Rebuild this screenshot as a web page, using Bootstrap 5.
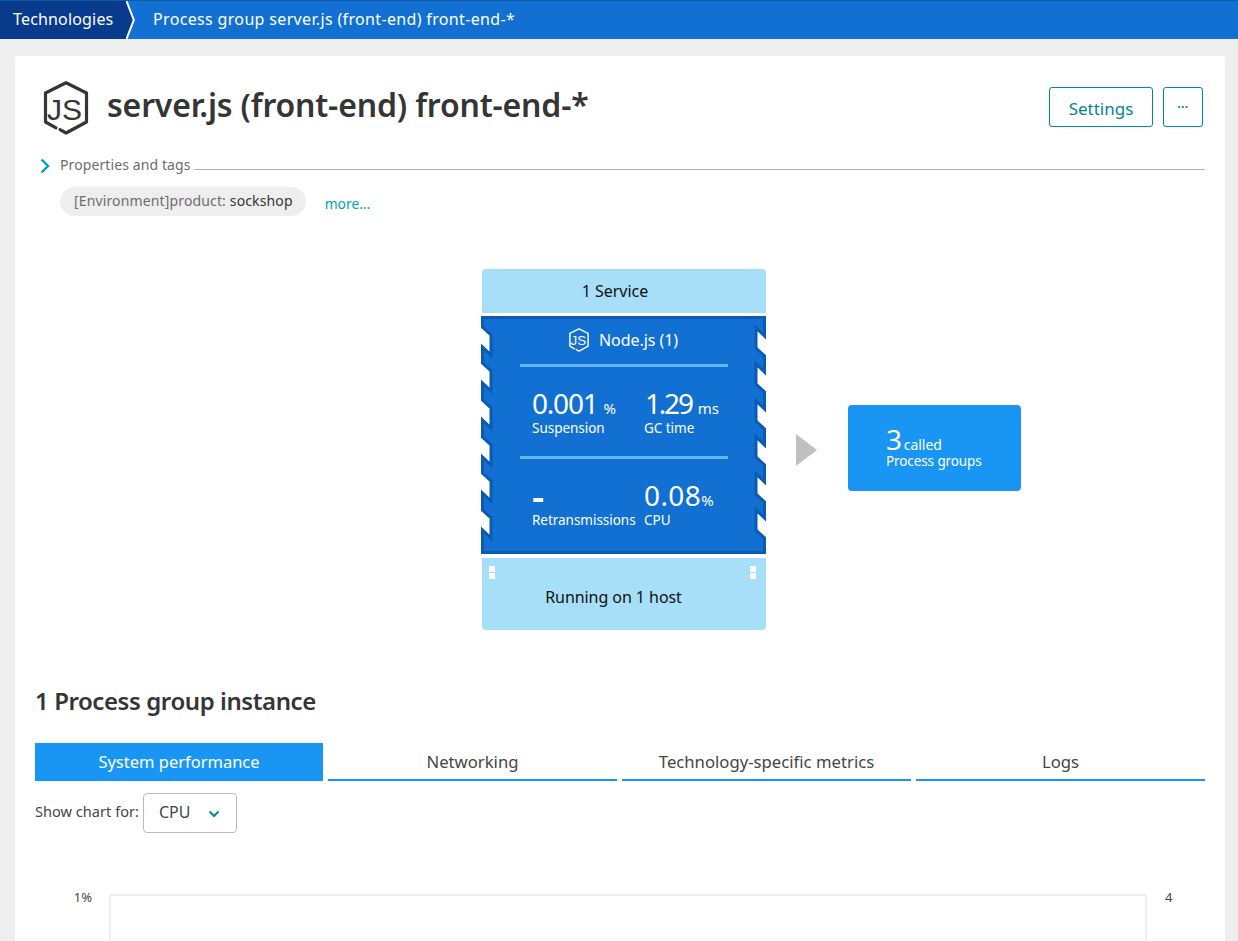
<!DOCTYPE html>
<html lang="en">
<head>
<meta charset="utf-8">
<title>Process group server.js</title>
<link href="https://cdn.jsdelivr.net/npm/bootstrap@5.3.0/dist/css/bootstrap.min.css" rel="stylesheet">
<style>
html,body{height:941px;overflow:hidden}
body{background:#eee;font-family:"Noto Sans","Liberation Sans",sans-serif;color:#454646}
.topbar{height:39px;background:#1170d2;border-top:1px solid #0e5aa8;color:#fff;font-size:16px}
.crumb-home{background:#083b8c;height:38px;width:126px;padding-left:13px;line-height:36px;letter-spacing:.17px}
.crumb-tip{display:block;flex:none}
.crumb-now{padding-left:17px;line-height:36px;letter-spacing:.34px}
.sheet{margin:17px 13px 0 15px;height:900px;background:#fff;border-radius:3px;overflow:hidden}
.head-row{padding:25px 22px 0 27px}
.pg-title{font-size:32px;line-height:52px;font-weight:600;color:#353535;margin:-2px 0 0 17px;letter-spacing:-.18px}
.btn-dt{border:1px solid #00899e;color:#00849b;border-radius:3px;height:40px;padding:0;line-height:38px;background:#fff;margin-top:6px}
.btn-set{width:104px;font-size:17px;line-height:41px}
.btn-more{width:40px;margin-left:10px;font-weight:700;font-size:12px;letter-spacing:.4px}
.props{margin:22px 20px 0 25px;height:16px;font-size:14px;color:#6d6d6d;line-height:16px;letter-spacing:.1px}
.props-chev{margin:1px 10px 0 0;flex:none}
.props-rule{height:1px;background:#b2b2b2;margin:12px 0 0 3px}
.tag-row{margin:14px 0 0 45px}
.tag-pill{background:#eee;border-radius:15px;height:29px;line-height:27px;padding:0 13px 0 14px;font-size:14px;color:#6d6d6d;letter-spacing:.14px}
.tag-pill b{font-weight:400;color:#353535}
.more-link{color:#00a1b2;font-size:13.8px;margin:7px 0 0 19px;line-height:20px;text-decoration:none}
.diagram{margin:53px 0 0 466px;height:361px}
.stack{width:285px}
.tier{background:#a6dff7;color:#111;font-size:16px;text-align:center}
.tier-top{height:44px;line-height:44px;border-radius:4px 4px 0 0;margin:0 0 3px 1px;padding-right:18px}
.tier-bottom{height:72px;line-height:78px;border-radius:0 0 4px 4px;margin:4px 0 0 1px;position:relative;padding-right:21px;letter-spacing:-.06px}
.port{position:absolute;width:6px;height:6px;background:#fff;top:8px}
.port-b{top:15px}
.port-l{left:7px}
.port-r{right:10px}
.proc{position:relative;height:238px;color:#fff}
.proc-bg{position:absolute;inset:0}
.proc-in{position:relative;padding:0 38px 0 39px}
.proc-name{height:48px;padding:12px 2px 0 0;font-size:16px;line-height:24px;letter-spacing:-.05px}
.proc-name svg{margin-right:9px;flex:none}
.sep{height:3px;background:#5fb6f2}
.mrow{display:grid;grid-template-columns:112px 96px;height:89px;padding:21px 0 0 12px}
.mrow.low{padding-top:22px}
.mrow.high .mlab{margin-top:1px}
.mrow.low .mval{margin:-1px 0 1px}
.mval{font-size:28px;height:30px;line-height:30px;white-space:nowrap;letter-spacing:.4px}
.mval.snug{letter-spacing:-1.2px}
.mval.tight{letter-spacing:-2.2px;padding-left:1px}
.mval small{font-size:15px;letter-spacing:0}
.mval.snug small{margin-left:6px}
.mval.tight small{margin-left:6px}
.mval .dash{font-size:38px;font-weight:600;letter-spacing:0}
.mlab{font-size:13.5px;line-height:19px;white-space:nowrap;letter-spacing:-.03px}
.flow-arrow{margin:165px 0 0 30px;flex:none}
.called{width:173px;height:86px;margin:136px 0 0 31px;background:#1996f3;color:#fff;border-radius:4px;padding:20px 0 0 38px;flex:none;font-size:13.5px;letter-spacing:-.1px}
.called-top{height:28px;line-height:28px;font-size:14px;letter-spacing:0}
.called-top span{font-size:28px;margin-right:-2px}
.called-sub{line-height:16px}
.pg-count{font-size:24px;line-height:30px;font-weight:600;color:#353535;margin:56px 0 0 20px;letter-spacing:-.42px}
.tabs-row{margin:27px 20px 0;gap:5px}
.tab-dt{flex:1 1 0;height:38px;line-height:37px;text-align:center;font-size:16.7px;color:#454646;border-bottom:2px solid #1996f3}
.tab-dt.on{flex:0 0 288px;background:#1996f3;color:#fff;font-size:16.5px}
.show-row{margin:12px 0 0 20px;font-size:14.6px}
.show-label{margin-top:-2px}
.pick{width:94px;height:40px;margin-left:4px;border:1px solid #bbb;border-radius:4px;padding-left:15px;font-size:16px;line-height:36px;color:#454646}
.pick svg{margin-left:18px}
.chart-row{margin:61px 0 0 0;font-size:13px}
.axis-l{width:94px;text-align:right;padding-right:17px;line-height:6px}
.plot{width:1038px;height:60px;border:2px solid #eee;border-bottom:0}
.axis-r{margin-left:18px;line-height:6px}
</style>
</head>
<body>
<div class="topbar d-flex">
  <div class="crumb-home">Technologies</div>
  <svg class="crumb-tip" width="10" height="38" viewBox="0 0 10 38"><polygon points="0,0 0,38 1,38 8,19 1,0" fill="#083b8c"/><polyline points="0.5,0 7.8,19 0.5,38" fill="none" stroke="#fff" stroke-width="2"/></svg>
  <div class="crumb-now">Process group server.js (front-end) front-end-*</div>
</div>

<div class="sheet">
  <div class="head-row d-flex align-items-start">
    <svg width="48" height="54" viewBox="0 0 48 54" class="flex-shrink-0">
      <path d="M14 46.8 L3.5 41 V12 L24 1.8 L44.5 12 V41 L24 52 L18 48.6" fill="none" stroke="#353535" stroke-width="3.2" stroke-linejoin="round" stroke-linecap="round"/>
      <text x="5" y="39" font-family="'Liberation Sans',sans-serif" font-size="30" fill="#353535">JS</text>
    </svg>
    <div class="pg-title flex-grow-1">server.js (front-end) front-end-*</div>
    <a class="btn btn-dt btn-set">Settings</a>
    <a class="btn btn-dt btn-more">···</a>
  </div>

  <div class="props d-flex">
    <svg class="props-chev" width="10" height="16" viewBox="0 0 10 16"><polyline points="1.5,1.5 8,8 1.5,14.5" fill="none" stroke="#00a1b2" stroke-width="2.4"/></svg>
    <span class="text-nowrap">Properties and tags</span>
    <div class="props-rule flex-grow-1"></div>
  </div>

  <div class="tag-row d-flex">
    <div class="tag-pill">[Environment]product: <b>sockshop</b></div>
    <a class="more-link">more...</a>
  </div>

  <div class="diagram d-flex align-items-start">
    <div class="stack flex-shrink-0">
      <div class="tier tier-top">1 Service</div>
      <div class="proc">
        <svg class="proc-bg" width="285" height="238" viewBox="0 0 285 238">
          <polygon fill="#1170d2" stroke="#0b5bb3" stroke-width="3" points="1.5,1.5 283.5,1.5 283.5,20 275,12 275,32 283.5,40 283.5,56 275,48 275,68 283.5,76 283.5,93 275,85 275,105 283.5,113 283.5,129 275,121 275,141 283.5,149 283.5,166 275,158 275,178 283.5,186 283.5,202 275,194 275,214 283.5,222 283.5,236.5 1.5,236.5 1.5,214 10,222 10,202 1.5,194 1.5,177 10,185 10,165 1.5,157 1.5,141 10,149 10,129 1.5,121 1.5,104 10,112 10,92 1.5,84 1.5,67 10,75 10,55 1.5,47 1.5,31 10,39 10,19 1.5,11"/>
        </svg>
        <div class="proc-in">
          <div class="proc-name d-flex justify-content-center">
            <svg width="22" height="24" viewBox="0 0 48 54">
              <path d="M14 46.8 L3.5 41 V12 L24 1.8 L44.5 12 V41 L24 52 L18 48.6" fill="none" stroke="#fff" stroke-width="3.2" stroke-linejoin="round" stroke-linecap="round"/>
              <text x="5" y="39" font-family="'Liberation Sans',sans-serif" font-size="30" fill="#fff">JS</text>
            </svg>
            <span>Node.js (1)</span>
          </div>
          <div class="sep"></div>
          <div class="mrow high">
            <div><div class="mval snug">0.001<small>%</small></div><div class="mlab">Suspension</div></div>
            <div><div class="mval tight">1.29<small>ms</small></div><div class="mlab">GC time</div></div>
          </div>
          <div class="sep"></div>
          <div class="mrow low">
            <div><div class="mval"><span class="dash">-</span></div><div class="mlab">Retransmissions</div></div>
            <div><div class="mval">0.08<small>%</small></div><div class="mlab">CPU</div></div>
          </div>
        </div>
      </div>
      <div class="tier tier-bottom">
        <i class="port port-l"></i><i class="port port-b port-l"></i>
        <i class="port port-r"></i><i class="port port-b port-r"></i>
        Running on 1 host
      </div>
    </div>
    <svg class="flow-arrow" width="21" height="32" viewBox="0 0 21 32"><polygon points="0,0 21,16 0,32" fill="#c0c0c0"/></svg>
    <div class="called">
      <div class="called-top"><span>3</span> called</div>
      <div class="called-sub">Process groups</div>
    </div>
  </div>

  <div class="pg-count">1 Process group instance</div>

  <div class="tabs-row d-flex">
    <div class="tab-dt on">System performance</div>
    <div class="tab-dt">Networking</div>
    <div class="tab-dt">Technology-specific metrics</div>
    <div class="tab-dt">Logs</div>
  </div>

  <div class="show-row d-flex align-items-center">
    <span class="show-label">Show chart for:</span>
    <div class="pick">CPU<svg width="12" height="8" viewBox="0 0 12 8"><polyline points="1.5,1.5 6,6 10.5,1.5" fill="none" stroke="#00899e" stroke-width="2"/></svg></div>
  </div>

  <div class="chart-row d-flex">
    <div class="axis-l">1%</div>
    <div class="plot"></div>
    <div class="axis-r">4</div>
  </div>
</div>
<script src="https://cdn.jsdelivr.net/npm/bootstrap@5.3.0/dist/js/bootstrap.bundle.min.js"></script>
</body>
</html>
